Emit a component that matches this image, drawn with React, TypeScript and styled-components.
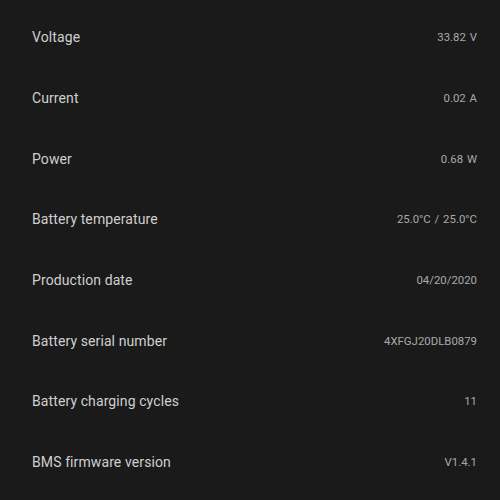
import React from "react";
import styled, { createGlobalStyle } from "styled-components";

const Global = createGlobalStyle`
  html, body { margin: 0; padding: 0; background: #1a1a1a; }
  body { font-family: Roboto, "Noto Sans", sans-serif; }
`;

const List = styled.div`
  width: 500px;
  height: 500px;
  box-sizing: border-box;
  padding-top: 7px;
  background: #1a1a1a;
  display: flex;
  flex-direction: column;
  overflow: hidden;
`;

const Row = styled.div`
  height: 60.7px;
  flex: 0 0 60.7px;
  display: flex;
  align-items: center;
  justify-content: space-between;
  padding: 0 23px 0 32px;
`;

const Label = styled.span`
  font-size: 14px;
  color: #cfcfcf;
  letter-spacing: 0.1px;
`;

const Value = styled.span`
  font-size: 11.4px;
  color: #a9a9a9;
  word-spacing: 1px;
`;

const items: [string, string][] = [
  ["Voltage", "33.82 V"],
  ["Current", "0.02 A"],
  ["Power", "0.68 W"],
  ["Battery temperature", "25.0°C / 25.0°C"],
  ["Production date", "04/20/2020"],
  ["Battery serial number", "4XFGJ20DLB0879"],
  ["Battery charging cycles", "11"],
  ["BMS firmware version", "V1.4.1"],
];

export default function App() {
  return (
    <>
      <Global />
      <List>
        {items.map(([l, v]) => (
          <Row key={l}>
            <Label>{l}</Label>
            <Value>{v}</Value>
          </Row>
        ))}
      </List>
    </>
  );
}
